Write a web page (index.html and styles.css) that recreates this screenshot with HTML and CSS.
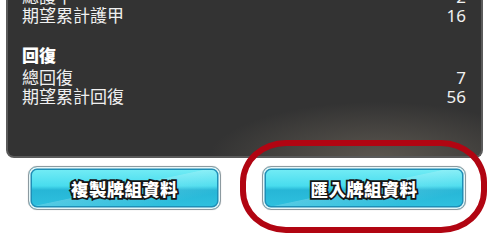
FILE: index.html
```html
<!DOCTYPE html>
<html lang="zh-Hant">
<head>
<meta charset="utf-8">
<link rel="stylesheet" href="styles.css">
</head>
<body>
<div class="page">
  <section class="panel">
    <div class="row"><span>總護甲</span><span>2</span></div>
    <div class="row"><span>期望累計護甲</span><span>16</span></div>
    <h3 class="title">回復</h3>
    <div class="row"><span>總回復</span><span>7</span></div>
    <div class="row"><span>期望累計回復</span><span>56</span></div>
  </section>
  <div class="actions">
    <button class="btn btn-copy"><span class="label">複製牌組資料</span></button>
    <button class="btn btn-import"><span class="label">匯入牌組資料</span></button>
  </div>
  <div class="circle"></div>
</div>
</body>
</html>
```

FILE: styles.css
```css
* { box-sizing: border-box; }
html, body { margin: 0; padding: 0; background: #fff; overflow: hidden; }
body { width: 488px; height: 251px; font-family: "Noto Sans", "Noto Sans CJK TC", sans-serif; }
.page { position: relative; display: flow-root; width: 488px; height: 251px; }

.panel {
  margin: -40px 0 0 6px;
  width: 477px;
  height: 198px;
  padding: 27px 15px 0 14px;
  background:
    radial-gradient(ellipse 170px 58px at 370px 200px, rgba(118,110,98,0.62), rgba(80,76,70,0) 100%),
    #333333;
  border: 2px solid #5a5a5a;
  border-top: none;
  border-radius: 0 0 8px 8px;
  color: #f0f0f0;
}
.row {
  display: flex;
  justify-content: space-between;
  font-size: 17px;
  line-height: 19px;
  height: 19px;
}
.title {
  margin: 21px 0 2px;
  font-size: 17px;
  line-height: 20px;
  font-weight: 900;
  color: #fff;
}

.actions {
  display: flex;
  align-items: flex-start;
  padding: 8px 0 0 28px;
  gap: 41px;
}
.btn {
  height: 44px;
  padding: 0;
  border: 1.5px solid #8c9aa0;
  border-radius: 9px;
  background:
    linear-gradient(168deg, rgba(255,255,255,0) 0 48%, rgba(255,255,255,0.18) 49%, rgba(255,255,255,0) 80%),
    linear-gradient(180deg, #78eef6 0%, #48dcee 45%, #26b6d6 55%, #30c2e0 100%);
  box-shadow: inset 0 0 0 1.5px #e6f6f8, inset 0 0 0 3px #1f8fb7, 0 0 1px rgba(0,0,0,0.3);
  display: flex;
  align-items: center;
  justify-content: center;
}
.btn-copy { width: 193px; }
.btn-import { width: 204px; }
.label {
  font-family: "Noto Sans CJK TC", sans-serif;
  font-weight: 900;
  font-size: 17.5px;
  letter-spacing: 0.3px;
  color: #fff;
  -webkit-text-stroke: 3.5px #151515;
  paint-order: stroke fill;
}

.circle {
  position: absolute;
  left: 240px;
  top: 140px;
  width: 247px;
  height: 93px;
  border: 6.5px solid #b10512;
  border-radius: 46px / 42px;
}
```
